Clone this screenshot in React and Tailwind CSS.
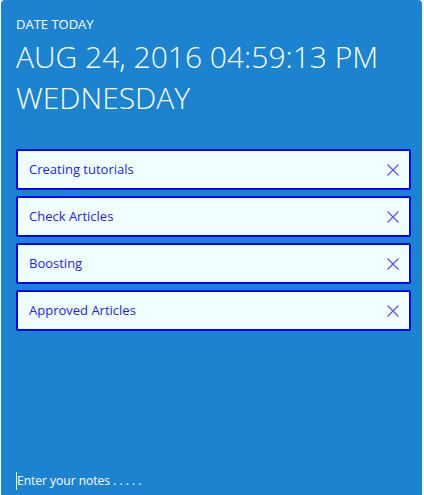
import React from "react";

const items = ["Creating tutorials", "Check Articles", "Boosting", "Approved Articles"];

function CloseIcon() {
  return (
    <svg width="12" height="12" viewBox="0 0 12 12" fill="none">
      <path d="M0.5 0.5 L11.5 11.5 M11.5 0.5 L0.5 11.5" stroke="#5a4cff" strokeWidth="1.1" />
    </svg>
  );
}

export default function App() {
  return (
    <div className="w-[424px] h-[495px] bg-white overflow-hidden" style={{ fontFamily: '"Open Sans", sans-serif' }}>
      <div className="ml-[1px] w-[421px] h-[500px] rounded-[4px] bg-[#1c83d1] flex flex-col">
        <div className="pl-[15px] pt-[15px] text-white">
          <div className="text-[13px] leading-[18px]">DATE TODAY</div>
          <div className="text-[30px] leading-[41px] font-light mt-[3px]">AUG 24, 2016 04:59:13 PM</div>
          <div className="text-[30px] leading-[41px] font-light">WEDNESDAY</div>
        </div>
        <div className="mt-[31px] pl-[15px] flex flex-col gap-[6px]">
          {items.map((t) => (
            <div
              key={t}
              className="w-[395px] h-[41px] border-2 border-[#0000ff] rounded-[2px] bg-[#f0ffff] flex items-center justify-between pl-[11px] pr-[10px] pt-[1px]"
            >
              <span className="text-[13px] text-[#2222ff]">{t}</span>
              <CloseIcon />
            </div>
          ))}
        </div>
        <div className="flex-1" />
        <div className="pl-[15px] pb-[10px] flex items-center">
          <div className="w-[1px] h-[18px] bg-white" />
          <span className="text-[12px] text-white leading-[18px]">Enter your notes . . . . .</span>
        </div>
      </div>
    </div>
  );
}
